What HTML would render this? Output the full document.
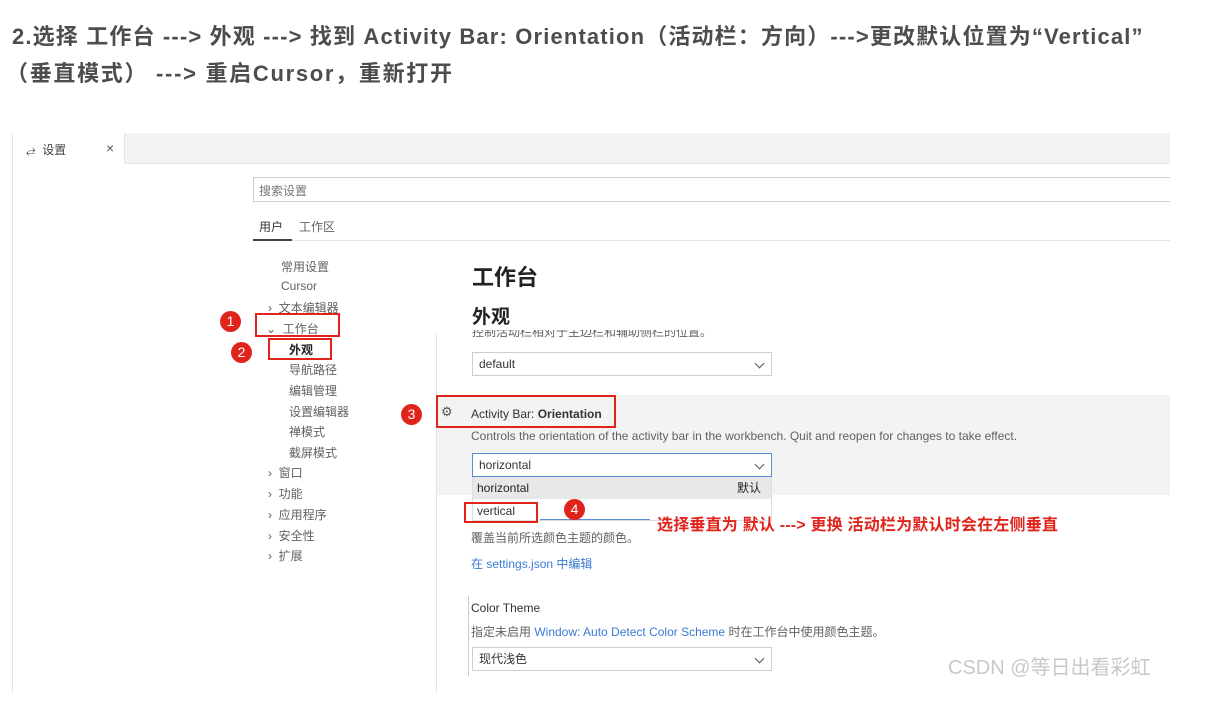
<!DOCTYPE html>
<html><head><meta charset="utf-8"><style>
*{margin:0;padding:0;box-sizing:border-box}
body{width:1205px;height:726px;background:#fff;position:relative;overflow:hidden;font-family:"Liberation Sans","Noto Sans CJK SC",sans-serif;color:#333}
.a{position:absolute;white-space:nowrap}
.title{font-weight:bold;font-size:22px;color:#4d4d4d;letter-spacing:1.15px}
.s{font-size:12px;color:#616161}
.red{border:2px solid #e0231b;position:absolute}
.num{position:absolute;width:21px;height:21px;border-radius:50%;background:#e0231b;color:#fff;font-size:14px;text-align:center;line-height:21px}
.sel{position:absolute;border:1px solid #cecece;background:#fff;font-size:12px;color:#333;padding:0 6px;line-height:22px;height:24px}
.chev{position:absolute;right:8px;top:7px;width:7px;height:7px;border-right:1px solid #555;border-bottom:1px solid #555;transform:rotate(45deg)}
</style></head><body>
<div class="a title" style="left:12px;top:19px">2.选择 工作台 ---&gt; 外观 ---&gt; 找到 Activity Bar: Orientation（活动栏：方向）---&gt;更改默认位置为“Vertical”</div>
<div class="a title" style="left:6px;top:56px;letter-spacing:1.7px">（垂直模式） ---&gt; 重启Cursor，重新打开</div>

<div class="a" style="left:12px;top:133px;width:1158px;height:560px;border-left:1px solid #e5e5e5"></div>
<div class="a" style="left:13px;top:133px;width:1157px;height:31px;background:#f3f3f3;border-bottom:1px solid #e5e5e5"></div>
<div class="a" style="left:13px;top:133px;width:112px;height:31px;background:#fff;border-right:1px solid #e5e5e5"></div>
<div class="a" style="left:26px;top:141px;font-size:12px;color:#444">⥄&nbsp; 设置</div>
<div class="a" style="left:106px;top:140px;font-size:14px;color:#555">×</div>

<div class="a" style="left:253px;top:177px;width:917px;height:25px;border:1px solid #cecece;border-right:none"></div>
<div class="a" style="left:259px;top:182px;font-size:12px;color:#767676">搜索设置</div>
<div class="a" style="left:253px;top:240px;width:917px;height:1px;background:#e5e5e5"></div>
<div class="a" style="left:253px;top:239px;width:39px;height:2px;background:#424242"></div>
<div class="a" style="left:259px;top:218px;font-size:12px;color:#333">用户</div>
<div class="a" style="left:299px;top:218px;font-size:12px;color:#616161">工作区</div>

<div class="a s" style="left:281px;top:258px">常用设置</div>
<div class="a s" style="left:281px;top:279px">Cursor</div>
<div class="a s" style="left:268px;top:299px">›&nbsp; 文本编辑器</div>
<div class="a s" style="left:266px;top:320px">⌄&nbsp; 工作台</div>
<div class="a s" style="left:289px;top:341px;color:#222;font-weight:bold">外观</div>
<div class="a s" style="left:289px;top:361px">导航路径</div>
<div class="a s" style="left:289px;top:382px">编辑管理</div>
<div class="a s" style="left:289px;top:403px">设置编辑器</div>
<div class="a s" style="left:289px;top:423px">禅模式</div>
<div class="a s" style="left:289px;top:444px">截屏模式</div>
<div class="a s" style="left:268px;top:464px">›&nbsp; 窗口</div>
<div class="a s" style="left:268px;top:485px">›&nbsp; 功能</div>
<div class="a s" style="left:268px;top:506px">›&nbsp; 应用程序</div>
<div class="a s" style="left:268px;top:527px">›&nbsp; 安全性</div>
<div class="a s" style="left:268px;top:547px">›&nbsp; 扩展</div>

<div class="a" style="left:436px;top:333px;width:1px;height:360px;background:#e5e5e5"></div>
<div class="a" style="left:472px;top:260px;font-size:22px;font-weight:bold;color:#222">工作台</div>
<div class="a" style="left:472px;top:302px;font-size:19px;font-weight:bold;color:#222">外观</div>
<div class="a s" style="left:472px;top:330px;height:9px;overflow:hidden;line-height:4px">控制活动栏相对于主边栏和辅助侧栏的位置。</div>
<div class="sel" style="left:472px;top:352px;width:300px">default<div class="chev"></div></div>

<div class="a" style="left:437px;top:395px;width:733px;height:100px;background:#f3f3f3"></div>
<div class="a" style="left:441px;top:404px;font-size:13px;color:#555">⚙</div>
<div class="a" style="left:471px;top:407px;font-size:12px;color:#333">Activity Bar: <b>Orientation</b></div>
<div class="a s" style="left:471px;top:429px">Controls the orientation of the activity bar in the workbench. Quit and reopen for changes to take effect.</div>
<div class="sel" style="left:472px;top:453px;width:300px;border-color:#5a8bd8">horizontal<div class="chev"></div></div>
<div class="a" style="left:472px;top:477px;width:300px;height:44px;background:#fff;border:1px solid #ddd;border-top:none"></div>
<div class="a" style="left:473px;top:477px;width:298px;height:22px;background:#e8e8e8;font-size:12px;line-height:22px;padding-left:4px;color:#222">horizontal<span style="position:absolute;right:10px">默认</span></div>
<div class="a" style="left:477px;top:504px;font-size:12px;color:#333">vertical</div>
<div class="a" style="left:540px;top:519px;width:110px;height:1px;background:#5a8bd8"></div>
<div class="a s" style="left:471px;top:529px">覆盖当前所选颜色主题的颜色。</div>
<div class="a" style="left:471px;top:555px;font-size:12px;color:#3a7bd5">在 settings.json 中编辑</div>

<div class="a" style="left:468px;top:596px;width:1px;height:80px;background:#ccc"></div>
<div class="a" style="left:471px;top:601px;font-size:12px;color:#333">Color Theme</div>
<div class="a s" style="left:471px;top:623px">指定未启用 <span style="color:#3a7bd5">Window: Auto Detect Color Scheme</span> 时在工作台中使用颜色主题。</div>
<div class="sel" style="left:472px;top:647px;width:300px">现代浅色<div class="chev"></div></div>
<div class="a" style="left:948px;top:651px;font-size:20px;color:#c8c8c8">CSDN @等日出看彩虹</div>

<div class="red" style="left:255px;top:313px;width:85px;height:24px"></div>
<div class="red" style="left:268px;top:338px;width:64px;height:22px"></div>
<div class="red" style="left:436px;top:395px;width:180px;height:33px"></div>
<div class="red" style="left:464px;top:502px;width:74px;height:21px"></div>
<div class="num" style="left:220px;top:311px">1</div>
<div class="num" style="left:231px;top:342px">2</div>
<div class="num" style="left:401px;top:404px">3</div>
<div class="num" style="left:564px;top:499px">4</div>
<div class="a" style="left:657px;top:511px;font-size:16px;font-weight:bold;color:#e0231b;letter-spacing:0.2px">选择垂直为 默认 ---&gt; 更换 活动栏为默认时会在左侧垂直</div>
</body></html>
